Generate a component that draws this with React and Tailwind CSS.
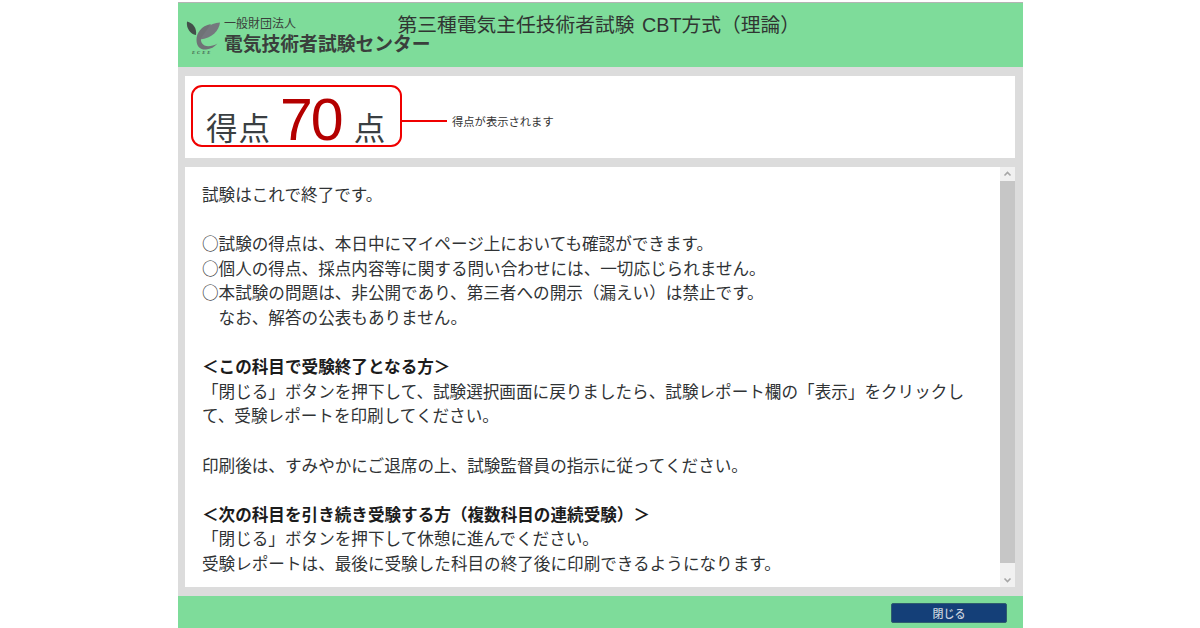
const JP = "font-['Noto_Sans_CJK_JP','Noto_Sans',sans-serif]";

function Logo() {
  return (
    <svg width="38" height="34" viewBox="0 0 38 34" className="shrink-0">
      <path d="M1 1.5 C7 3 11 8 10 15 C4 14 0 8 1 1.5 Z" fill="#434f4a" />
      <path d="M14 19.5 C15 10 24 3 34 2.5 C33 11 26 18 14 19.5 Z" fill="#75787e" />
      <path d="M25 4 C15 6 10.5 13 10.5 20 C10.5 27 15 30 20 29.5 C25 29 28.5 27 31.5 23.5 C27 26 22 27 18.5 25.5 C15.5 24 14.5 21 15 18 Z" fill="#6f7276" />
      <text x="6" y="33.5" fontSize="4.6" fontWeight="700" fontStyle="italic" fill="#3f5a49" fontFamily="Liberation Serif, serif" letterSpacing="2">ECEE</text>
    </svg>
  );
}

function Line({ children, bold }) {
  return <p className={`h-[24.6px] leading-[24.6px] whitespace-nowrap ${bold ? "font-bold text-[#1c1c1c]" : ""}`}>{children || "\u00a0"}</p>;
}

const lines = [
  ["試験はこれで終了です。"],
  [""],
  ["○試験の得点は、本日中にマイページ上においても確認ができます。"],
  ["○個人の得点、採点内容等に関する問い合わせには、一切応じられません。"],
  ["○本試験の問題は、非公開であり、第三者への開示（漏えい）は禁止です。"],
  ["　なお、解答の公表もありません。"],
  [""],
  ["＜この科目で受験終了となる方＞", true],
  ["「閉じる」ボタンを押下して、試験選択画面に戻りましたら、試験レポート欄の「表示」をクリックし"],
  ["て、受験レポートを印刷してください。"],
  [""],
  ["印刷後は、すみやかにご退席の上、試験監督員の指示に従ってください。"],
  [""],
  ["＜次の科目を引き続き受験する方（複数科目の連続受験）＞", true],
  ["「閉じる」ボタンを押下して休憩に進んでください。"],
  ["受験レポートは、最後に受験した科目の終了後に印刷できるようになります。"],
];

export default function App() {
  return (
    <div className={`w-[1200px] h-[628px] bg-white overflow-hidden pt-[2px] ${JP}`}>
      <div className="ml-[178px] w-[845px] h-[626px] bg-[#dcdcdc] flex flex-col border-t border-[#b4b4b4]">
        <header className="h-[64px] shrink-0 bg-[#7edc9a] flex pl-[8px]">
          <div className="pt-[17px]"><Logo /></div>
          <div className="pt-[11px] text-[#3a3f3c]">
            <div className="text-[12px] leading-[18px] w-[72px]">一般財団法人</div>
            <div className="text-[18.8px] leading-[24px] font-bold whitespace-nowrap -mt-[1px]">電気技術者試験センター</div>
          </div>
          <h1 className="ml-[-33px] pt-[7px] text-[19.75px] leading-[28px] text-[#303532] whitespace-nowrap">第三種電気主任技術者試験 <span className="ml-[3px] font-['Liberation_Sans']">CBT</span>方式（理論）</h1>
        </header>

        <section className="mt-[9px] ml-[7px] mr-[8px] h-[82px] bg-white shrink-0 flex items-start pl-[6px] pt-[9px]">
          <div className="w-[211px] h-[62px] rounded-[11px] border-2 border-[#f00000] flex items-end pl-[13px] text-[#3a3f42]">
            <span className="text-[31.5px] leading-[40px] tracking-[1px] mb-[-1px]">得点</span>
            <span className="ml-[9px] text-[59px] leading-[60px] tracking-[-2px] mb-[-5px] text-[#b40000] font-['Liberation_Sans']">70</span>
            <span className="ml-[12px] text-[31.5px] leading-[40px] mb-[-1px]">点</span>
          </div>
          <div className="mt-[35px] w-[45px] h-[2px] bg-[#f00000]" />
          <span className="ml-[5px] mt-[29px] text-[11.3px] leading-[14px] text-[#333] whitespace-nowrap">得点が表示されます</span>
        </section>

        <section className="mt-[9px] ml-[7px] mr-[8px] h-[420px] bg-white shrink-0 flex">
          <div className="flex-1 pl-[17px] pt-[15px] text-[16.6px] text-[#303335]">
            {lines.map(([t, b], i) => <Line key={i} bold={b}>{t}</Line>)}
          </div>
          <div className="w-[15px] bg-[#f1f1f1] flex flex-col items-center">
            <svg width="15" height="14" viewBox="0 0 15 14" className="shrink-0"><path d="M4.5 8.5 L7.5 5.5 L10.5 8.5" fill="none" stroke="#a6a6a6" strokeWidth="1.6" /></svg>
            <div className="w-[15px] h-[382px] bg-[#c6c6c6]" />
            <div className="flex-1" />
            <svg width="15" height="14" viewBox="0 0 15 14" className="shrink-0"><path d="M4.5 5.5 L7.5 8.5 L10.5 5.5" fill="none" stroke="#a6a6a6" strokeWidth="1.6" /></svg>
          </div>
        </section>

        <footer className="mt-[9px] flex-1 bg-[#7edc9a] flex justify-end items-start pt-[7px] pr-[16px]">
          <button className="w-[116px] h-[20px] rounded-[2px] bg-[#143f78] text-[#c9d2de] text-[11px] leading-[16px] font-medium border border-[#2f5d6e]">閉じる</button>
        </footer>
      </div>
    </div>
  );
}
